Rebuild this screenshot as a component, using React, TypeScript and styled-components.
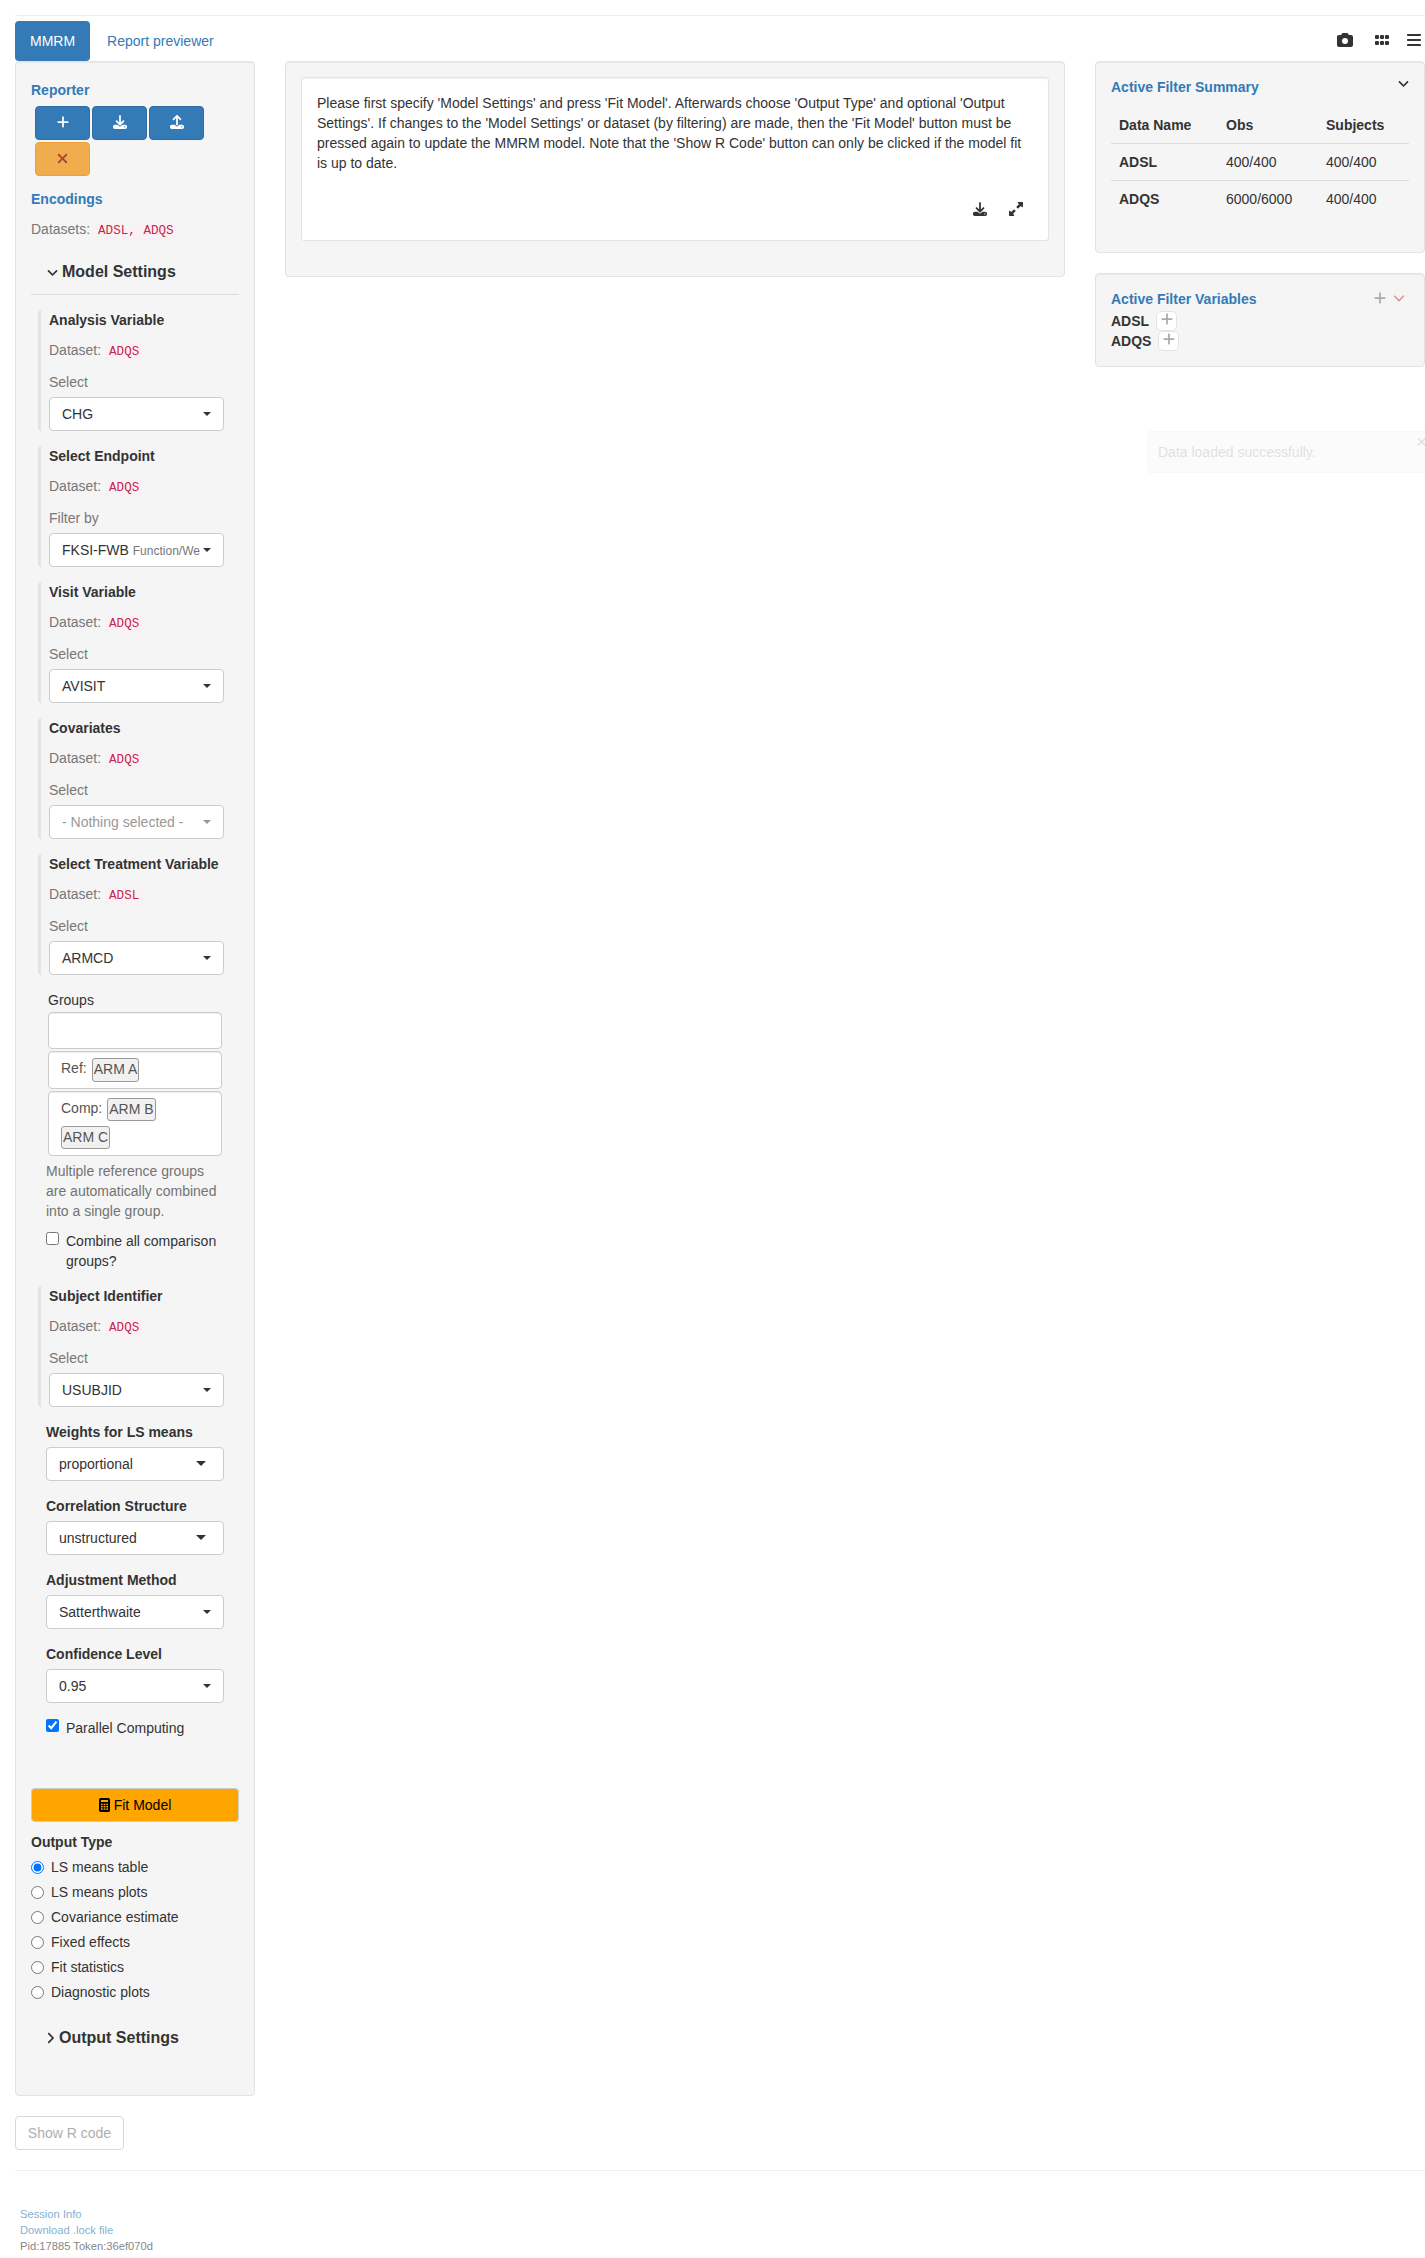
import React from 'react';
import styled, { createGlobalStyle, css } from 'styled-components';
import {
  FaPlus, FaDownload, FaUpload, FaXmark, FaAngleDown, FaAngleRight,
  FaCamera, FaGrip, FaBars, FaUpRightAndDownLeftFromCenter,
} from 'react-icons/fa6';

const Global = createGlobalStyle`
  *, *::before, *::after { box-sizing: border-box; }
  body {
    margin: 0; background: #fff; color: #333; overflow-x: hidden;
    font: 14px/20px "Liberation Sans", Arial, sans-serif;
  }
  input { margin: 0; width: 13px; height: 13px; flex: none; }
  svg { display: block; flex: none; }
`;

const Page = styled.div`
  position: relative;
  height: 2258px;
  padding: 15px 0 0 15px;
  overflow: hidden;
`;
const Rule = styled.hr`
  margin: 0; border: 0; height: 1px; background: #eee;
`;
const Divider = styled.hr`margin: 0 0 15px; border: 0; height: 1px; background: #ddd;`;
const Nav = styled.nav`
  display: flex; justify-content: space-between; height: 40px; margin-top: 5px;
`;
const Tabs = styled.div`display: flex; gap: 2px;`;
const Tab = styled.a<{ $active?: boolean }>`
  padding: 10px 15px; border-radius: 4px; color: #337ab7;
  ${p => p.$active && css`background: #337ab7; color: #fff;`}
`;
const NavIcons = styled.div`
  display: flex; align-items: flex-start; padding: 11px 3px 0 0; color: #333;
`;
const NavIcon = styled.span<{ $gap?: number }>`
  margin-left: ${p => p.$gap || 0}px;
`;
const Columns = styled.div`
  display: grid; grid-template-columns: 240px 780px 330px; column-gap: 30px; align-items: start;
`;
const Well = styled.section<{ $h: number }>`
  height: ${p => p.$h}px; padding: 15px; background: #f5f5f5;
  border: 1px solid #e3e3e3; border-radius: 4px;
  box-shadow: inset 0 1px 1px rgba(0, 0, 0, 0.05);
`;
const Heading = styled.div`font-weight: 700; color: #337ab7;`;
const ButtonRow = styled.div`
  display: flex; flex-wrap: wrap; gap: 2px; padding: 6px 0 0 4px;
`;
const IconButton = styled.button<{ $warn?: boolean }>`
  display: flex; align-items: center; justify-content: center;
  width: 55px; height: 34px; padding: 0 0 2px; border-radius: 4px;
  border: 1px solid ${p => (p.$warn ? '#eea236' : '#2e6da4')};
  background: ${p => (p.$warn ? '#f0ad4e' : '#337ab7')};
  color: ${p => (p.$warn ? '#b0413e' : '#fff')};
`;
const Muted = styled.div<{ $mt?: number }>`
  color: #777; height: 20px; margin-top: ${p => p.$mt || 0}px; white-space: nowrap;
`;
const Code = styled.code`
  padding: 2px 4px; border-radius: 4px;
  font: 12.6px "Liberation Mono", monospace; color: #c7254e; background: #f9f2f4;
`;
const PanelTitle = styled.div<{ $icon: number; $gap: number }>`
  display: flex; align-items: center; gap: ${p => p.$gap}px; height: 20px;
  padding-left: 15px; font-size: 16px; font-weight: 700;
  svg { width: ${p => p.$icon}px; }
`;
const Encoding = styled.div`
  height: 121px; margin: 0 15px 15px 7px; padding-left: 8px;
  border-left: 3px solid #e3e3e3; border-radius: 4px;
`;
const Label = styled.div`font-weight: 700; height: 20px;`;
const Select = styled.div<{ $muted?: boolean }>`
  display: flex; align-items: center; justify-content: space-between;
  height: 34px; margin-top: 5px; padding: 0 12px;
  border: 1px solid #ccc; border-radius: 4px; background: #fff;
  color: ${p => (p.$muted ? '#999' : '#333')}; white-space: nowrap;
`;
const SelectText = styled.span`flex: 1; min-width: 0; overflow: hidden; max-width: 138px;`;
const Small = styled.small`font-size: 12px; color: #777;`;
const Caret = styled.i<{ $big?: boolean }>`
  border-style: solid; border-color: currentColor transparent transparent;
  border-width: ${p => (p.$big ? '5px 5px 0' : '4px 4px 0')};
  margin-right: ${p => (p.$big ? 5 : 0)}px;
  margin-top: ${p => (p.$big ? -1 : 0)}px;
`;
const Field = styled.div`
  height: 59px; margin: 0 15px 15px 15px;
`;
const Groups = styled.div`margin: 0 17px 0 17px;`;
const Bucket = styled.div<{ $h: number }>`
  height: ${p => p.$h}px; margin-bottom: 2px; padding: 6px 20px 0 12px; color: #555;
  border: 1px solid #ccc; border-radius: 4px; background: #fff;
  box-shadow: inset 0 1px 1px rgba(0, 0, 0, 0.075);
  display: flex; flex-wrap: wrap; align-content: flex-start; column-gap: 5px; row-gap: 5px;
`;
const Chip = styled.span<{ $h?: number }>`
  height: ${p => p.$h || 23}px; padding: 0 1px; border: 1px solid #999; border-radius: 3px; background: #f1f1f1;
`;
const BucketLabel = styled.span`height: 20px;`;
const Help = styled.p`margin: 5px 0 0 15px; width: 180px; color: #737373;`;
const Check = styled.label<{ $ml: number; $mt: number; $drop?: number }>`
  display: flex; gap: 7px; margin: ${p => p.$mt}px 0 0 ${p => p.$ml}px;
  input { margin-top: ${p => p.$drop ?? 1}px; }
`;
const FitButton = styled.button`
  display: flex; align-items: center; justify-content: center; gap: 4px;
  width: 100%; height: 34px; margin-top: 50px; padding: 0;
  font: inherit; color: #000; background: orange; border: 1px solid #ccc; border-radius: 4px;
`;
const Card = styled.div`
  height: 164px; padding: 15px; background: #fff; border: 1px solid #e3e3e3; border-radius: 3px;
  box-shadow: inset 0 1px 1px rgba(0, 0, 0, 0.05);
`;
const CardText = styled.p`margin: 0; width: 716px;`;
const CardTools = styled.div`
  display: flex; justify-content: flex-end; gap: 22px; padding: 29px 10px 0 0;
`;
const SideColumn = styled.div`display: flex; flex-direction: column; gap: 20px;`;
const TitleRow = styled.div`display: flex; justify-content: space-between; height: 20px;`;
const SummaryToggle = styled.span`margin-right: -1px;`;
const Table = styled.table`
  width: 298px; margin-top: 10px; border-collapse: separate; border-spacing: 0; table-layout: fixed;
  th, td { height: 37px; padding: 0 8px; text-align: left; vertical-align: middle; }
  thead th { height: 36px; }
  tbody th, tbody td { border-top: 1px solid #ddd; }
`;
const VarTools = styled.div`display: flex; gap: 5px; padding: 2px 3px 0 0;`;
const VarRow = styled.div`
  display: flex; align-items: center; gap: 7px; height: 20px; font-weight: 700;
`;
const AddButton = styled.button`
  display: flex; justify-content: center; align-items: flex-start; width: 21px; height: 20px; padding: 0;
  background: #fff; border: 1px solid #e3e3e3; border-radius: 5px; color: #aaa;
`;
const ShowCode = styled.button`
  width: 109px; height: 34px; margin: 20px 0; padding: 0; display: block;
  font: inherit; color: #333; background: #fff; border: 1px solid #a0a0a0; border-radius: 4px; opacity: .4;
`;
const Footer = styled.footer`
  padding: 35px 0 0 5px; font-size: 11.2px; line-height: 16px; opacity: .6;
`;
const FootLine = styled.div<{ $link?: boolean }>`color: ${p => (p.$link ? '#337ab7' : '#333')};`;
const Toast = styled.div`
  position: absolute; left: 1147px; top: 431px; width: 290px; height: 42px; padding: 10px;
  border: 1px solid #ccc; border-radius: 3px; background: #e8e8e8; color: #333; opacity: .15;
`;
const ToastClose = styled.span`
  position: absolute; left: 268px; top: 0; font-size: 19px; line-height: 20px;
`;
const Spacer = styled.div<{ $h: number }>`height: ${p => p.$h}px;`;

function CalculatorIcon() {
  return (
    <svg width="11" height="14" viewBox="0 0 33 42">
      <rect width="33" height="42" rx="5" fill="#000" />
      <rect x="6" y="6" width="21" height="6" fill="orange" />
      {[17, 24, 31].map(y => [6, 14, 22].map(x => (
        <rect key={`${x}-${y}`} x={x} y={y} width="5" height="4.5" fill="orange" />
      )))}
    </svg>
  );
}

function EncodingBlock({ title, dataset, label = 'Select', value, note, muted }: {
  title: string; dataset: string; label?: string; value: string; note?: string; muted?: boolean;
}) {
  return (
    <Encoding>
      <Label>{title}</Label>
      <Muted $mt={10}>Dataset: <Code>{dataset}</Code></Muted>
      <Muted $mt={12}>{label}</Muted>
      <Select $muted={muted}>
        <SelectText>{value}{note && <> <Small>{note}</Small></>}</SelectText>
        <Caret />
      </Select>
    </Encoding>
  );
}

function FieldBlock({ title, value, big }: { title: string; value: string; big?: boolean }) {
  return (
    <Field>
      <Label>{title}</Label>
      <Select><SelectText>{value}</SelectText><Caret $big={big} /></Select>
    </Field>
  );
}

const outputs = ['LS means table', 'LS means plots', 'Covariance estimate', 'Fixed effects', 'Fit statistics', 'Diagnostic plots'];
const rows = [['ADSL', '400/400', '400/400'], ['ADQS', '6000/6000', '400/400']];

export default function App() {
  return (
    <Page>
      <Global />
      <Rule />
      <Nav>
        <Tabs>
          <Tab $active>MMRM</Tab>
          <Tab>Report previewer</Tab>
        </Tabs>
        <NavIcons>
          <NavIcon><FaCamera size={16} /></NavIcon>
          <NavIcon $gap={21}><FaGrip size={16} /></NavIcon>
          <NavIcon $gap={16}><FaBars size={16} /></NavIcon>
        </NavIcons>
      </Nav>
      <Columns>
        <Well $h={2035}>
          <Spacer $h={3} />
          <Heading>Reporter</Heading>
          <ButtonRow>
            <IconButton><FaPlus size={14} /></IconButton>
            <IconButton><FaDownload size={14} /></IconButton>
            <IconButton><FaUpload size={14} /></IconButton>
            <IconButton $warn><FaXmark size={15} /></IconButton>
          </ButtonRow>
          <Spacer $h={13} />
          <Heading>Encodings</Heading>
          <Muted $mt={10}>Datasets: <Code>ADSL, ADQS</Code></Muted>
          <Spacer $h={23} />
          <PanelTitle $icon={13} $gap={3}><FaAngleDown size={13} />Model Settings</PanelTitle>
          <Spacer $h={12} />
          <Divider />
          <EncodingBlock title="Analysis Variable" dataset="ADQS" value="CHG" />
          <EncodingBlock title="Select Endpoint" dataset="ADQS" label="Filter by" value="FKSI-FWB" note="Function/We" />
          <EncodingBlock title="Visit Variable" dataset="ADQS" value="AVISIT" />
          <EncodingBlock title="Covariates" dataset="ADQS" value="- Nothing selected -" muted />
          <EncodingBlock title="Select Treatment Variable" dataset="ADSL" value="ARMCD" />
          <Groups>
            <Spacer $h={22}>Groups</Spacer>
            <Bucket $h={37} />
            <Bucket $h={38}><BucketLabel>Ref:</BucketLabel><Chip $h={24}>ARM A</Chip></Bucket>
            <Bucket $h={65}><BucketLabel>Comp:</BucketLabel><Chip>ARM B</Chip><Chip>ARM C</Chip></Bucket>
          </Groups>
          <Help>Multiple reference groups are automatically combined into a single group.</Help>
          <Check $ml={15} $mt={10}><input type="checkbox" />Combine all comparison groups?</Check>
          <Spacer $h={15} />
          <EncodingBlock title="Subject Identifier" dataset="ADQS" value="USUBJID" />
          <FieldBlock title="Weights for LS means" value="proportional" big />
          <FieldBlock title="Correlation Structure" value="unstructured" big />
          <FieldBlock title="Adjustment Method" value="Satterthwaite" />
          <FieldBlock title="Confidence Level" value="0.95" />
          <Check $ml={15} $mt={0}><input type="checkbox" defaultChecked />Parallel Computing</Check>
          <FitButton><CalculatorIcon />Fit Model</FitButton>
          <Spacer $h={10} />
          <Label>Output Type</Label>
          {outputs.map((name, i) => (
            <Check key={name} $ml={0} $mt={5} $drop={4}>
              <input type="radio" name="output" defaultChecked={i === 0} />{name}
            </Check>
          ))}
          <Spacer $h={26} />
          <PanelTitle $icon={9} $gap={4}><FaAngleRight size={14} />Output Settings</PanelTitle>
        </Well>
        <Well as="main" $h={216}>
          <Card>
            <CardText>
              Please first specify 'Model Settings' and press 'Fit Model'. Afterwards choose 'Output Type' and optional 'Output
              Settings'. If changes to the 'Model Settings' or dataset (by filtering) are made, then the 'Fit Model' button must be
              pressed again to update the MMRM model. Note that the 'Show R Code' button can only be clicked if the model fit
              is up to date.
            </CardText>
            <CardTools>
              <FaDownload size={14} />
              <FaUpRightAndDownLeftFromCenter size={14} />
            </CardTools>
          </Card>
        </Well>
        <SideColumn>
          <Well $h={192}>
            <TitleRow>
              <Heading>Active Filter Summary</Heading>
              <SummaryToggle><FaAngleDown size={13} /></SummaryToggle>
            </TitleRow>
            <Table>
              <colgroup><col width="107" /><col width="100" /><col width="91" /></colgroup>
              <thead><tr><th>Data Name</th><th>Obs</th><th>Subjects</th></tr></thead>
              <tbody>
                {rows.map(([name, obs, subj]) => (
                  <tr key={name}><th>{name}</th><td>{obs}</td><td>{subj}</td></tr>
                ))}
              </tbody>
            </Table>
          </Well>
          <Well $h={94}>
            <TitleRow>
              <Heading>Active Filter Variables</Heading>
              <VarTools>
                <FaPlus size={14} color="#aaa" />
                <FaAngleDown size={14} color="#d9999b" />
              </VarTools>
            </TitleRow>
            <Spacer $h={2} />
            <VarRow>ADSL<AddButton><FaPlus size={14} /></AddButton></VarRow>
            <VarRow>ADQS<AddButton><FaPlus size={14} /></AddButton></VarRow>
          </Well>
        </SideColumn>
      </Columns>
      <ShowCode>Show R code</ShowCode>
      <Rule />
      <Footer>
        <FootLine $link>Session Info</FootLine>
        <FootLine $link>Download .lock file</FootLine>
        <FootLine>Pid:17885 Token:36ef070d</FootLine>
      </Footer>
      <Toast>Data loaded successfully.<ToastClose>×</ToastClose></Toast>
    </Page>
  );
}
